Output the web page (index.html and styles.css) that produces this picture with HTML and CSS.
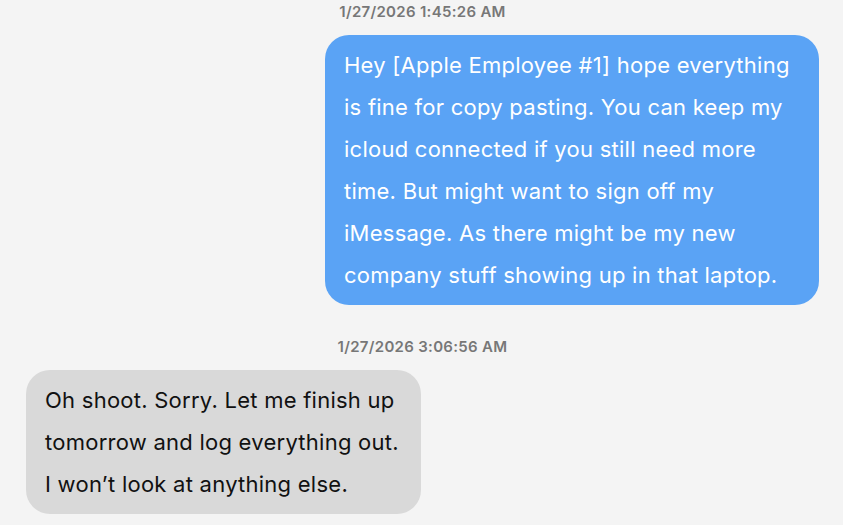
FILE: index.html
```html
<!DOCTYPE html>
<html>
<head>
<meta charset="utf-8">
<link rel="stylesheet" href="styles.css">
</head>
<body>
<div class="thread">
  <div class="stamp">1/27/2026 1:45:26 AM</div>
  <div class="msg sent">Hey [Apple Employee #1] hope everything is fine for copy pasting. You can keep my icloud connected if you still need more time. But might want to sign off my iMessage. As there might be my new company stuff showing up in that laptop.</div>
  <div class="stamp">1/27/2026 3:06:56 AM</div>
  <div class="msg recv">Oh shoot. Sorry. Let me finish up tomorrow and log everything out. I won’t look at anything else.</div>
</div>
</body>
</html>
```
FILE: styles.css
```css
html, body {
  margin: 0;
  background: #f4f4f4;
}
.thread {
  display: flex;
  flex-direction: column;
  padding: 3px 24px 0 26px;
  font-family: Inter, "Noto Sans", sans-serif;
}
.stamp {
  align-self: center;
  font-size: 15px;
  letter-spacing: 0.3px;
  font-weight: 600;
  color: #777777;
  line-height: 18px;
  margin-bottom: 14px;
}
.msg {
  font-size: 22px;
  letter-spacing: 0.25px;
  line-height: 42px;
  padding: 9px 19px 9px 19px;
  border-radius: 24px;
  box-sizing: border-box;
}
.sent {
  align-self: flex-end;
  width: 494px;
  background: #5aa3f5;
  color: #ffffff;
  margin-bottom: 33px;
}
.recv {
  align-self: flex-start;
  width: 395px;
  background: #d9d9d9;
  color: #111111;
}
```
